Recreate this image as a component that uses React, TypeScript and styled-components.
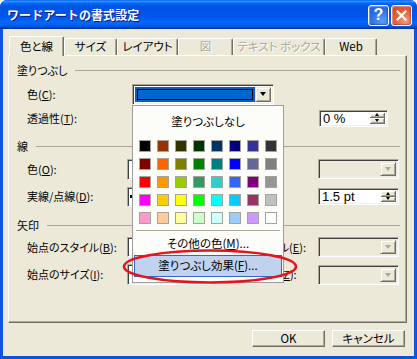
import React from "react";
import styled, { createGlobalStyle } from "styled-components";

const Global = createGlobalStyle`
  html, body { margin: 0; padding: 0; background: #ffffff; }
  body {
    width: 417px; height: 359px; overflow: hidden;
    font-family: "Noto Sans CJK JP", "Noto Sans", sans-serif;
    font-size: 11px; color: #000; line-height: 1;
    font-feature-settings: "palt";
  }
  * { box-sizing: border-box; }
  u { text-decoration-thickness: 1px; text-underline-offset: 1px; }
`;

const Window = styled.div`
  position: relative;
  width: 417px; height: 359px;
  display: flex; flex-direction: column;
  background: linear-gradient(to right, #0831d9 0, #166aee 1px, #0855dd 2px, #0855dd 415px, #166aee 416px, #0831d9 417px);
  border-radius: 7px 7px 0 0;
  overflow: hidden;
`;

const TitleBar = styled.div`
  height: 29px; flex: none;
  display: flex; align-items: center; justify-content: space-between;
  padding: 1px 5px 0 7px;
  background: linear-gradient(to bottom,
    #0058ee 0%, #3593ff 4%, #288eff 6%, #127dff 8%, #036ffc 10%, #0262ee 14%,
    #0057e5 20%, #0054e3 24%, #0055eb 56%, #005bf5 66%, #026afe 76%,
    #0062ef 86%, #0052d6 92%, #0040ab 96%, #003092 100%);
`;

const Title = styled.span`
  color: #fff; font-weight: bold; font-size: 12px;
  font-feature-settings: normal;
  text-shadow: 1px 1px #0a1883;
  letter-spacing: 0.1px;
`;

const CaptionButtons = styled.div`
  display: flex; gap: 2px;
`;

const CaptionButton = styled.div<{ $kind: "help" | "close" }>`
  width: 21px; height: 21px;
  border: 1px solid #fff; border-radius: 3px;
  display: flex; align-items: center; justify-content: center;
  color: #fff; font-family: "Liberation Sans", sans-serif; font-weight: bold; font-size: 16px;
  background: ${p => p.$kind === "help"
    ? "radial-gradient(circle at 70% 80%, #5a9cf9 0%, #2d6fe8 55%, #1c56d8 100%)"
    : "radial-gradient(circle at 70% 80%, #f29a7a 0%, #e3623e 50%, #c9401c 100%)"};
  box-shadow: inset -1px -1px 1px rgba(0,0,0,0.25), inset 1px 1px 1px rgba(255,255,255,0.35);
`;

const Body = styled.div`
  flex: 1; margin: 0 3px 3px;
  background: #ece9d8;
  display: flex; flex-direction: column;
  padding: 7px 7px 0 5px;
`;

const TabStrip = styled.div`
  display: flex; align-items: flex-end;
  height: 19px; padding-left: 1px;
  position: relative; z-index: 1;
  font-size: 11.5px;
`;

const Tab = styled.div<{ $w: number; $active?: boolean; $disabled?: boolean }>`
  width: ${p => p.$w}px;
  height: ${p => (p.$active ? 20 : 17)}px;
  margin-bottom: ${p => (p.$active ? -1 : 0)}px;
  background: #ece9d8;
  border-top: 1px solid #fff;
  border-left: 1px solid #fff;
  border-right: 1px solid #716f64;
  box-shadow: inset -1px 0 #aca899;
  border-radius: 2px 2px 0 0;
  display: flex; align-items: center; justify-content: center;
  padding-top: ${p => (p.$active ? 1 : 0)}px;
  color: ${p => (p.$disabled ? "#aca899" : "#000")};
  text-shadow: ${p => (p.$disabled ? "1px 1px #fff" : "none")};
  white-space: nowrap;
`;

const Panel = styled.div`
  height: 268px; flex: none;
  border-top: 1px solid #fff;
  border-left: 1px solid #fff;
  border-right: 1px solid #716f64;
  border-bottom: 1px solid #716f64;
  box-shadow: inset -1px -1px #aca899;
  display: flex; flex-direction: column;
  padding-top: 5px;
`;

const Heading = styled.div<{ $mt?: number }>`
  height: 18px; flex: none;
  margin-top: ${p => p.$mt ?? 0}px;
  display: flex; align-items: center;
  padding: 0 6px 0 8px;
  &::after {
    content: ""; flex: 1; height: 1px; margin-left: 8px;
    background: #aca899;
  }
`;

const Row = styled.div<{ $h: number }>`
  height: ${p => p.$h}px; flex: none;
  display: flex; align-items: center;
  padding: 0 7px 0 18px;
`;

const Label = styled.span<{ $w: number; $pl?: number }>`
  width: ${p => p.$w}px; flex: none;
  padding-left: ${p => p.$pl ?? 0}px;
  white-space: nowrap;
`;

const Spacer = styled.div`flex: 1;`;

const Sunken = styled.div<{ $w: number; $h: number; $bg?: string }>`
  width: ${p => p.$w}px; height: ${p => p.$h}px; flex: none;
  border-top: 1px solid #aca899; border-left: 1px solid #aca899;
  border-right: 1px solid #fff; border-bottom: 1px solid #fff;
  box-shadow: inset 1px 1px #404040, inset -1px -1px #f1efe2;
  background: ${p => p.$bg ?? "#fff"};
  display: flex; align-items: stretch;
  padding: 2px;
`;

const ComboField = styled.div<{ $sel?: boolean }>`
  flex: 1;
  background: ${p => (p.$sel ? "#0a5ac8" : "transparent")};
  padding: 2px 2px;
  display: flex;
`;

const ColorSample = styled.div<{ $c: string }>`
  flex: 1; border: 1px solid #000; background: ${p => p.$c};
`;

const ArrowButton = styled.div`
  width: 16px; flex: none;
  background: #ece9d8;
  border-top: 1px solid #ece9d8; border-left: 1px solid #ece9d8;
  border-right: 1px solid #716f64; border-bottom: 1px solid #716f64;
  box-shadow: inset 1px 1px #fff, inset -1px -1px #aca899;
  display: flex; align-items: center; justify-content: center;
`;

const Arrow = styled.span<{ $dir?: "up" | "down"; $gray?: boolean; $size?: number }>`
  width: 0; height: 0;
  border-left: ${p => p.$size ?? 3.5}px solid transparent;
  border-right: ${p => p.$size ?? 3.5}px solid transparent;
  ${p => (p.$dir === "up" ? "border-bottom" : "border-top")}: ${p => (p.$size ?? 3.5) + 0.5}px solid ${p => (p.$gray ? "#aca899" : "#000")};
`;

const SpinText = styled.span`
  flex: 1; display: flex; align-items: center; padding-left: 1px;
  font-family: "Liberation Sans", sans-serif; font-size: 13px;
`;

const SpinButtons = styled.div`
  width: 15px; flex: none; display: flex; flex-direction: column; gap: 0;
`;

const SpinButton = styled.div`
  flex: 1;
  background: #ece9d8;
  border-right: 1px solid #716f64; border-bottom: 1px solid #716f64;
  box-shadow: inset 1px 1px #fff, inset -1px -1px #aca899;
  display: flex; align-items: center; justify-content: center;
`;

const LineSample = styled.div`
  width: 3px; height: 3px; background: #000; align-self: center; margin-left: 0;
`;

const ButtonRow = styled.div`
  display: flex; justify-content: flex-end; gap: 7px;
  margin-top: 7px; padding-right: 2px;
`;

const PushButton = styled.div`
  width: 73px; height: 17px;
  border-top: 1px solid #fff; border-left: 1px solid #fff;
  border-right: 1px solid #716f64; border-bottom: 1px solid #716f64;
  box-shadow: inset -1px -1px #aca899;
  background: #ece9d8;
  display: flex; align-items: center; justify-content: center;
  font-size: 11.5px;
`;

/* --- popup palette --- */
const Popup = styled.div`
  position: absolute; left: 132px; top: 105px;
  width: 152px; height: 178px;
  background: #fcfcf9;
  border: 1px solid #9d9d9d;
  display: flex; flex-direction: column;
  z-index: 5;
  font-size: 11.5px;
`;

const MenuItem = styled.div<{ $h: number; $hot?: boolean }>`
  height: ${p => p.$h}px; flex: none;
  display: flex; align-items: center; justify-content: center;
  margin: 0 ${p => (p.$hot ? 1 : 0)}px;
  background: ${p => (p.$hot ? "#c1d2ee" : "transparent")};
  border: 1px solid ${p => (p.$hot ? "#316ac5" : "transparent")};
`;

const Swatches = styled.div`
  display: grid; grid-template-columns: repeat(8, 12px);
  gap: 6px; padding-left: 6px; margin-top: 2px;
`;

const Swatch = styled.div<{ $c: string }>`
  width: 12px; height: 12px;
  border: 1px solid #a5a39a;
  background: ${p => p.$c};
`;

const Separator = styled.div`
  height: 1px; background: #aca899; margin: 6px 3px 2px;
`;

const Ellipse = styled.svg`
  position: absolute; left: 118px; top: 246px; z-index: 6; overflow: visible;
`;

const palette = [
  "#000000", "#993300", "#333300", "#003300", "#003366", "#000080", "#333399", "#333333",
  "#800000", "#ff6600", "#808000", "#008000", "#008080", "#0000ff", "#666699", "#808080",
  "#ff0000", "#ff9900", "#99cc00", "#339966", "#33cccc", "#3366ff", "#800080", "#969696",
  "#ff00ff", "#ffcc00", "#ffff00", "#00ff00", "#00ffff", "#00ccff", "#993366", "#c0c0c0",
  "#ff99cc", "#ffcc99", "#ffff99", "#ccffcc", "#ccffff", "#99ccff", "#cc99ff", "#ffffff",
];

const DisabledCombo = () => (
  <Sunken $w={81} $h={20} $bg="#ece9d8">
    <ComboField />
    <ArrowButton><Arrow $gray /></ArrowButton>
  </Sunken>
);

const Spin = ({ w, text }: { w: number; text: string }) => (
  <Sunken $w={w} $h={17}>
    <SpinText>{text}</SpinText>
    <SpinButtons>
      <SpinButton><Arrow $dir="up" $size={2.5} /></SpinButton>
      <SpinButton><Arrow $dir="down" $size={2.5} /></SpinButton>
    </SpinButtons>
  </Sunken>
);

export default function App() {
  return (
    <>
      <Global />
      <Window>
        <TitleBar>
          <Title>ワードアートの書式設定</Title>
          <CaptionButtons>
            <CaptionButton $kind="help">?</CaptionButton>
            <CaptionButton $kind="close">
              <svg width="11" height="11" viewBox="0 0 11 11">
                <path d="M1.5 1.5 L9.5 9.5 M9.5 1.5 L1.5 9.5" stroke="#fff" strokeWidth="2.2" strokeLinecap="square" />
              </svg>
            </CaptionButton>
          </CaptionButtons>
        </TitleBar>
        <Body>
          <TabStrip>
            <Tab $w={55} $active>色と線</Tab>
            <Tab $w={53}>サイズ</Tab>
            <Tab $w={61}>レイアウト</Tab>
            <Tab $w={55} $disabled>図</Tab>
            <Tab $w={92} $disabled>テキスト ボックス</Tab>
            <Tab $w={52}>Web</Tab>
          </TabStrip>
          <Panel>
            <Heading>塗りつぶし</Heading>
            <Row $h={30}>
              <Label $w={105}>色(<u>C</u>):</Label>
              <Sunken $w={142} $h={21}>
                <ComboField $sel><ColorSample $c="#0066cc" /></ComboField>
                <ArrowButton><Arrow /></ArrowButton>
              </Sunken>
            </Row>
            <Row $h={18}>
              <Label $w={100}>透過性(<u>T</u>):</Label>
              <Spacer />
              <div style={{ marginRight: 11 }}>
                <Spin w={69} text="0 %" />
              </div>
            </Row>
            <Heading $mt={10}>線</Heading>
            <Row $h={28}>
              <Label $w={100}>色(<u>O</u>):</Label>
              <Sunken $w={84} $h={21}>
                <ComboField><ColorSample $c="#ffffff" /></ComboField>
              </Sunken>
              <Label $w={107} />
              <DisabledCombo />
            </Row>
            <Row $h={27}>
              <Label $w={100}>実線/点線(<u>D</u>):</Label>
              <Sunken $w={84} $h={20}>
                <LineSample />
              </Sunken>
              <Label $w={107} />
              <Spin w={81} text="1.5 pt" />
            </Row>
            <Heading $mt={6}>矢印</Heading>
            <Row $h={26}>
              <Label $w={100}>始点のスタイル(<u>B</u>):</Label>
              <Sunken $w={84} $h={20} />
              <Label $w={107} $pl={6}>終点のスタイル(<u>E</u>):</Label>
              <DisabledCombo />
            </Row>
            <Row $h={29}>
              <Label $w={100}>始点のサイズ(<u>I</u>):</Label>
              <Sunken $w={84} $h={21} />
              <Label $w={107} $pl={6}>終点のサイズ(<u>Z</u>):</Label>
              <DisabledCombo />
            </Row>
          </Panel>
          <ButtonRow>
            <PushButton>OK</PushButton>
            <PushButton>キャンセル</PushButton>
          </ButtonRow>
        </Body>

        <Popup>
          <MenuItem $h={32}>塗りつぶしなし</MenuItem>
          <Swatches>
            {palette.map((c, i) => <Swatch key={i} $c={c} />)}
          </Swatches>
          <Separator />
          <MenuItem $h={22}>その他の色(<u>M</u>)...</MenuItem>
          <MenuItem $h={22} $hot>塗りつぶし効果(<u>F</u>)...</MenuItem>
        </Popup>
        <Ellipse width="184" height="42" viewBox="0 0 184 42">
          <ellipse cx="92" cy="20.5" rx="86" ry="16" fill="none" stroke="#e8121c" strokeWidth="2.6" />
        </Ellipse>
      </Window>
    </>
  );
}
